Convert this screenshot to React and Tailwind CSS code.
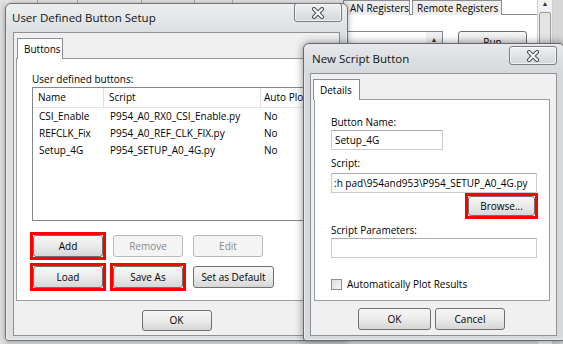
import React from "react";

function CloseBtn({ className }) {
  return (
    <div className={"absolute flex h-[19px] w-[48px] items-center justify-center rounded-[3px] border border-[#7a7d82] bg-linear-to-b from-[#eef0f2] to-[#d3d6da] shadow-[inset_0_0_0_1px_rgba(255,255,255,0.6)] " + className}>
      <svg width="16" height="12" viewBox="0 0 16 12">
        <path d="M4 2 L12 10 M12 2 L4 10" stroke="#4a4d52" strokeWidth="4" strokeLinecap="round" fill="none" />
        <path d="M4 2 L12 10 M12 2 L4 10" stroke="#ffffff" strokeWidth="2" strokeLinecap="round" fill="none" />
      </svg>
    </div>
  );
}

function Btn({ children, w, h, disabled, red }) {
  return (
    <div className="relative">
      <div
        className={
          w +
          " " +
          h +
          " flex items-center justify-center rounded-[3px] border text-[10px] " +
          (disabled
            ? "border-[#b5b9bc] bg-[#f4f4f4] text-[#8a8a8a]"
            : "border-[#707070] bg-linear-to-b from-[#f6f6f6] via-[#ebebeb] to-[#d6d6d6] text-black")
        }
      >
        {children}
      </div>
      {red && <div className="pointer-events-none absolute -inset-[3px] border-[3px] border-[#ff0000]" />}
    </div>
  );
}

function Input({ w, children }) {
  return (
    <div className={w + " flex h-[20px] items-center overflow-hidden whitespace-nowrap border border-[#c9cbd0] border-t-[#abadb3] bg-white px-[3px] text-[10px] text-black"}>
      {children}
    </div>
  );
}

function Tab({ label, w }) {
  return (
    <div className={w + " relative z-10 -mb-px flex h-[21px] items-center border border-b-0 border-[#898c95] bg-white pl-[6px] text-[10px] text-black"}>
      {label}
    </div>
  );
}

export default function App() {
  const rows = [
    ["CSI_Enable", "P954_A0_RX0_CSI_Enable.py", "No"],
    ["REFCLK_Fix", "P954_A0_REF_CLK_FIX.py", "No"],
    ["Setup_4G", "P954_SETUP_A0_4G.py", "No"],
  ];
  return (
    <div className="relative h-[344px] w-[563px] overflow-hidden bg-white font-['Open_Sans',sans-serif] text-black">
      {/* background application */}
      <div className="flex h-full w-full">
        <div className="w-[5px] bg-[#e2e2e2]" />
        <div className="flex w-[532px] flex-col">
          <div className="flex h-[15px] border-b border-[#8c8c8c] bg-white">
            <div className="flex w-[338px] bg-[#ececec]">
              <div className="w-[33px] border-r border-[#b4b4b4]" />
              <div className="w-[40px] border-r border-[#b4b4b4]" />
              <div className="w-[64px] border-r border-[#b4b4b4]" />
              <div className="w-[53px] border-r border-[#b4b4b4]" />
              <div className="w-[38px] border-r border-[#b4b4b4]" />
            </div>
            <div className="flex h-[15px] w-[67px] items-center border border-b-0 border-[#8c8c8c] bg-[#ededed] pl-[6px] text-[10px] whitespace-nowrap">
              AN Registers
            </div>
            <div className="ml-[2px] flex h-[15px] w-[90px] items-center border border-b-0 border-[#8c8c8c] bg-[#ededed] pl-[4px] text-[10px] whitespace-nowrap">
              Remote Registers
            </div>
          </div>
          <div className="mt-[16px] flex">
            <div className="flex h-[300px] w-[438px] justify-end border border-[#828790]">
              <div className="flex w-[16px] justify-center bg-[#f0f0f0] pt-[3px] text-[7px] text-[#333]">▲</div>
            </div>
            <div className="ml-[15px] flex h-[22px] w-[69px] items-center justify-center rounded-[3px] border border-[#707070] bg-linear-to-b from-[#f6f6f6] to-[#dcdcdc] text-[10px]">
              Run
            </div>
          </div>
          <div className="mt-auto h-[3px] bg-[#d8d8d8]" />
        </div>
        <div className="flex w-[16px] flex-col items-center border-x border-[#d0d0d0] bg-[#f0f0f0]">
          <div className="h-[10px] text-[7px] leading-[8px] text-[#333]">▲</div>
          <div className="mt-[2px] h-[300px] w-[12px] rounded-[2px] border border-[#9a9a9a] bg-[#e4e4e4]" />
        </div>
        <div className="flex-1 bg-[#d6d6d6]" />
      </div>

      {/* User Defined Button Setup dialog */}
      <div className="absolute left-[5px] top-[3px] flex h-[338px] w-[343px] flex-col rounded-t-[6px] rounded-b-[3px] border border-[#6f7276] bg-[#dcdfe2] shadow-[0_0_6px_rgba(0,0,0,0.35),inset_0_0_0_1px_rgba(255,255,255,0.55)]">
        <div className="relative flex h-[28px] items-center rounded-t-[6px] bg-linear-to-b from-[#eceef0] to-[#dcdfe2] pl-[6px] text-[11.5px] text-[#111]">
          User Defined Button Setup
          <CloseBtn className="right-[5px] top-[-1px]" />
        </div>
        <div className="mx-[7px] flex flex-col border border-[#8e9196] bg-[#f0f0f0] pt-[5px] pl-[2px] pr-[2px]">
          <div className="ml-[1px] flex">
            <Tab label="Buttons" w="w-[46px]" />
          </div>
          <div className="flex h-[243px] flex-col border border-[#9a9ca1] bg-white pl-[15px] pr-[15px] pt-[13px]">
            <div className="h-[14px] text-[10px] leading-[14px] text-black">User defined buttons:</div>
            <div className="mt-[1px] h-[134px] overflow-hidden border border-[#828790] bg-white text-[10px] text-black">
              <div className="flex h-[20px] border-b border-[#e5e5e5]">
                <div className="flex w-[71px] shrink-0 items-center border-r border-[#e0e0e0] pl-[5px]">Name</div>
                <div className="flex w-[157px] shrink-0 items-center border-r border-[#e0e0e0] pl-[5px]">Script</div>
                <div className="flex w-[80px] shrink-0 items-center pl-[3px] whitespace-nowrap">Auto Plot</div>
              </div>
              {rows.map((r) => (
                <div key={r[0]} className="flex h-[17px] items-center">
                  <div className="w-[71px] shrink-0 pl-[6px]">{r[0]}</div>
                  <div className="w-[157px] shrink-0 pl-[6px]">{r[1]}</div>
                  <div className="w-[80px] shrink-0 pl-[3px]">{r[2]}</div>
                </div>
              ))}
            </div>
            <div className="mt-[14px] ml-[1px] flex gap-[10px]">
              <Btn w="w-[70px]" h="h-[22px]" red>Add</Btn>
              <Btn w="w-[70px]" h="h-[22px]" disabled>Remove</Btn>
              <Btn w="w-[70px]" h="h-[22px]" disabled>Edit</Btn>
            </div>
            <div className="mt-[9px] ml-[1px] flex gap-[10px]">
              <Btn w="w-[70px]" h="h-[22px]" red>Load</Btn>
              <Btn w="w-[70px]" h="h-[22px]" red>Save As</Btn>
              <Btn w="w-[81px]" h="h-[22px]">Set as Default</Btn>
            </div>
          </div>
          <div className="mt-[9px] mb-[4px] flex justify-center">
            <Btn w="w-[70px]" h="h-[21px]">OK</Btn>
          </div>
        </div>
      </div>

      {/* New Script Button dialog */}
      <div className="absolute left-[303px] top-[43px] flex h-[298px] w-[262px] flex-col rounded-t-[6px] rounded-b-[3px] border border-[#64676b] bg-[#d6d9dc] shadow-[0_0_8px_rgba(0,0,0,0.45),inset_0_0_0_1px_rgba(255,255,255,0.5)]">
        <div className="relative flex h-[29px] items-center rounded-t-[6px] bg-linear-to-b from-[#e6e8eb] to-[#d6d9dc] pl-[8px] text-[11.5px] text-[#111]">
          New Script Button
          <CloseBtn className="right-[7px] top-[2px]" />
        </div>
        <div className="ml-[6px] mr-[7px] flex flex-col border border-[#8e9196] bg-[#f0f0f0] pt-[5px] pl-[2px] pr-[6px]">
          <div className="flex">
            <Tab label="Details" w="w-[47px]" />
          </div>
          <div className="ml-[1px] flex h-[202px] flex-col border border-[#9a9ca1] bg-white pl-[16px] pt-[15px] text-[10px] text-black">
            <div className="h-[14px] leading-[14px]">Button Name:</div>
            <div className="mt-[1px]">
              <Input w="w-[112px]">Setup_4G</Input>
            </div>
            <div className="mt-[6px] h-[14px] leading-[14px]">Script:</div>
            <div className="mt-[3px]">
              <Input w="w-[206px]">
                <span className="-ml-[1px]">:h pad\954and953\P954_SETUP_A0_4G.py</span>
              </Input>
            </div>
            <div className="mt-[3px] flex w-[206px] justify-end pr-[2px]">
              <Btn w="w-[67px]" h="h-[20px]" red>Browse...</Btn>
            </div>
            <div className="mt-[7px] h-[14px] leading-[14px]">Script Parameters:</div>
            <div className="mt-[1px]">
              <Input w="w-[206px]"></Input>
            </div>
            <div className="mt-[19px] flex items-center">
              <div className="h-[11px] w-[11px] border border-[#8f8f8f] bg-linear-to-br from-[#dcdcdc] to-[#f6f6f6]" />
              <div className="ml-[5px]">Automatically Plot Results</div>
            </div>
          </div>
          <div className="mt-[7px] mb-[5px] flex justify-center gap-[4px]">
            <Btn w="w-[73px]" h="h-[22px]">OK</Btn>
            <Btn w="w-[70px]" h="h-[22px]">Cancel</Btn>
          </div>
        </div>
      </div>
    </div>
  );
}
